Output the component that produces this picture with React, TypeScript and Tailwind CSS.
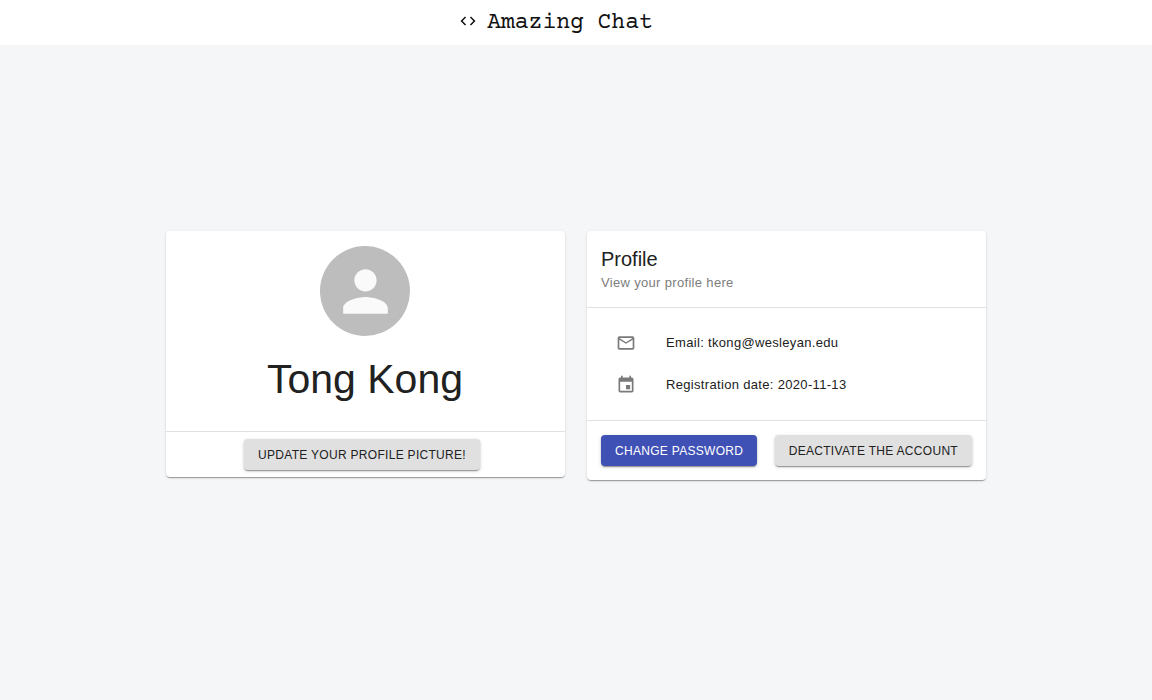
import type { ButtonHTMLAttributes, ReactNode } from "react";
import { MdCode, MdEvent, MdMailOutline, MdPerson } from "react-icons/md";

const elevation =
  "shadow-[0_2px_1px_-1px_rgba(0,0,0,0.2),0_1px_1px_0_rgba(0,0,0,0.14),0_1px_3px_0_rgba(0,0,0,0.12)]";

function Card({ children }: { children: ReactNode }) {
  return <section className={`rounded bg-white ${elevation}`}>{children}</section>;
}

function Button({
  primary = false,
  children,
  ...rest
}: ButtonHTMLAttributes<HTMLButtonElement> & { primary?: boolean }) {
  const tone = primary ? "bg-[#3f51b5] text-white" : "bg-[#e0e0e0] text-[#212121]";
  return (
    <button
      type="button"
      className={`h-[31px] cursor-pointer rounded px-3.5 text-xs tracking-wide whitespace-nowrap uppercase shadow-[0_2px_1px_-1px_rgba(0,0,0,0.25),0_1px_2px_0_rgba(0,0,0,0.2),0_1px_4px_0_rgba(0,0,0,0.12)] ${tone}`}
      {...rest}
    >
      {children}
    </button>
  );
}

function Detail({ icon, children }: { icon: ReactNode; children: ReactNode }) {
  return (
    <li className="flex h-[42px] items-center gap-[30px] text-[13px] tracking-wide">
      <span className="text-[#7a7a7a]">{icon}</span>
      {children}
    </li>
  );
}

export default function App() {
  return (
    <div className="min-h-screen bg-[#f4f6f8] font-['Liberation_Sans',Arial,sans-serif] text-[#212121]">
      <header className="flex h-[45px] items-start justify-center gap-2.5 bg-white pt-3 pr-10 text-[#111111]">
        <MdCode size={18} aria-hidden="true" />
        <h1 className="font-['Courier_Prime','Courier_10_Pitch','Liberation_Mono',monospace] text-[23px] leading-none">
          Amazing Chat
        </h1>
      </header>

      <main className="mx-auto grid max-w-[820px] grid-cols-2 items-start gap-[22px] pt-[186px]">
        <Card>
          <div className="flex h-[200px] flex-col items-center pt-[15px] pr-px">
            <div className="flex size-[90px] items-center justify-center rounded-full bg-[#bdbdbd] text-[#fafafa]">
              <MdPerson size={67} aria-hidden="true" />
            </div>
            <h2 className="mt-5 text-[41px] leading-[46px]">Tong Kong</h2>
          </div>
          <div className="flex justify-center border-t border-[#e0e0e0] py-[7px] pr-[7px]">
            <Button>Update your profile picture!</Button>
          </div>
        </Card>

        <Card>
          <div className="p-3.5">
            <h2 className="text-xl leading-7">Profile</h2>
            <p className="text-[13px] leading-5 tracking-wide text-[#7d7d7d]">View your profile here</p>
          </div>
          <ul className="border-t border-[#e0e0e0] px-[29px] py-3.5">
            <Detail icon={<MdMailOutline size={20} aria-hidden="true" />}>Email: tkong@wesleyan.edu</Detail>
            <Detail icon={<MdEvent size={20} aria-hidden="true" />}>Registration date: 2020-11-13</Detail>
          </ul>
          <div className="flex justify-between border-t border-[#e0e0e0] p-3.5">
            <Button primary>Change password</Button>
            <Button>Deactivate the account</Button>
          </div>
        </Card>
      </main>
    </div>
  );
}
